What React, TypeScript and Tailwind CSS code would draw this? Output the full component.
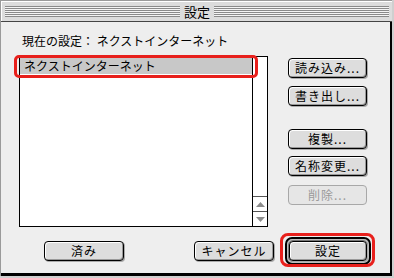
import React from "react";

const font = { fontFamily: '"Noto Sans CJK JP", "Noto Sans", sans-serif' };

function Stripes() {
  return (
    <div className="flex-1 flex flex-col gap-[1px] bg-[#f4f4f4]">
      {[0, 1, 2, 3, 4, 5].map((i) => (
        <div key={i} className="h-[1px] bg-[#8a8a8a]" />
      ))}
    </div>
  );
}

function Btn({ label, disabled, w = 79 }: { label: string; disabled?: boolean; w?: number }) {
  return (
    <div
      className={
        "h-[20px] rounded-[4px] border flex items-center justify-center text-[12px] leading-none " +
        (disabled
          ? "border-[#a8a8a8] bg-[#e6e6e6] text-[#9a9a9a]"
          : "border-black bg-[#dddddd] text-black shadow-[inset_1px_1px_0_#ffffff,inset_-1px_-1px_0_#999999,1px_1px_0_#aaaaaa]")
      }
      style={{ width: w }}
    >
      <span className="tracking-[1px]">{label}</span>
    </div>
  );
}

export default function App() {
  return (
    <div className="w-[394px] h-[278px] bg-[#cfcfcf] relative" style={font}>
      <div className="w-[392px] h-[276px] flex flex-col border-l border-t border-[#9a9a9a]">
        {/* title bar */}
        <div className="h-[21px] bg-[#dcdcdc] border-b border-[#444] flex items-center pl-[4px] pr-[3px] gap-[3px] shadow-[inset_1px_1px_0_#ffffff]">
          <Stripes />
          <span className="text-[13px] leading-none text-black px-[1px]">設定</span>
          <Stripes />
        </div>
        {/* body */}
        <div className="flex-1 bg-[#eeeeee] border-r-[2px] border-b-[3px] border-black flex flex-col pl-[18px]">
          <div className="mt-[12px] text-[12px] leading-[14px] text-black pl-[3px]">
            現在の設定：&nbsp;ネクストインターネット
          </div>
          <div className="flex mt-[8px]">
            {/* list */}
            <div className="w-[249px] h-[171px] border border-black bg-white flex">
              <div className="flex-1 flex flex-col">
                <div className="h-[17px] bg-[#c8c8c8] text-[12px] leading-[17px] pl-[4px] text-black">
                  ネクストインターネット
                </div>
              </div>
              <div className="w-[15px] border-l border-black flex flex-col justify-end">
                <div className="h-[15px] border-t border-[#555] flex items-center justify-center">
                  <svg width="9" height="5" viewBox="0 0 9 5"><path d="M4.5 0 L9 5 L0 5 Z" fill="#8c8c8c" /></svg>
                </div>
                <div className="h-[15px] border-t border-[#555] flex items-center justify-center">
                  <svg width="9" height="5" viewBox="0 0 9 5"><path d="M0 0 L9 0 L4.5 5 Z" fill="#8c8c8c" /></svg>
                </div>
              </div>
            </div>
            {/* right buttons */}
            <div className="ml-[20px] mt-[2px] flex flex-col">
              <Btn label="読み込み..." />
              <div className="h-[8px]" />
              <Btn label="書き出し..." />
              <div className="h-[23px]" />
              <Btn label="複製..." />
              <div className="h-[7px]" />
              <Btn label="名称変更..." />
              <div className="h-[9px]" />
              <Btn label="削除..." disabled />
            </div>
          </div>
          <div className="flex items-center mt-[10px]">
            <div className="ml-[25px]"><Btn label="済み" w={80} /></div>
            <div className="ml-[70px]"><Btn label="キャンセル" w={80} /></div>
            <div className="ml-[11px] rounded-[7px] border-2 border-black bg-[#bdbdbd] p-[1px]">
              <div className="rounded-[5px] border border-[#777] p-0">
                <Btn label="設定" w={78} />
              </div>
            </div>
          </div>
        </div>
      </div>
      {/* red highlights */}
      <div className="absolute left-[14px] top-[55px] w-[244px] h-[23px] rounded-[5px] border-[3px] border-[#e8201c]" />
      <div className="absolute left-[280px] top-[233px] w-[95px] h-[34px] rounded-[8px] border-[3px] border-[#e8201c]" />
    </div>
  );
}
